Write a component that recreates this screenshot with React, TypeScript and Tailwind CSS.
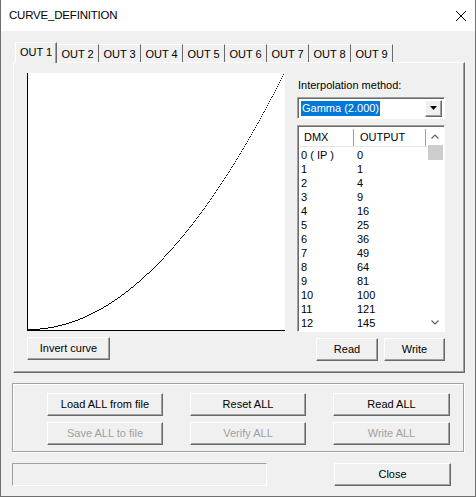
import React from "react";

const rows: [string, string][] = [
  ["0 ( IP )", "0"],
  ["1", "1"],
  ["2", "4"],
  ["3", "9"],
  ["4", "16"],
  ["5", "25"],
  ["6", "36"],
  ["7", "49"],
  ["8", "64"],
  ["9", "81"],
  ["10", "100"],
  ["11", "121"],
  ["12", "145"],
];

const tabs = ["OUT 1", "OUT 2", "OUT 3", "OUT 4", "OUT 5", "OUT 6", "OUT 7", "OUT 8", "OUT 9"];

function Btn({ label, w, disabled }: { label: string; w: string; disabled?: boolean }) {
  return (
    <div
      className={`${w} h-[23px] flex items-center justify-center bg-[#f0f0f0] border border-t-white border-l-white border-r-[#696969] border-b-[#696969] shadow-[inset_-1px_-1px_0_#a0a0a0] ${
        disabled ? "text-[#a0a0a0]" : "text-black"
      }`}
    >
      {label}
    </div>
  );
}

function CurvePlot() {
  const pts: React.ReactElement[] = [];
  for (let i = 0; i < 256; i++) {
    const y = 256 - Math.round((i * i) / 255);
    pts.push(<rect key={i} x={i} y={y} width={1} height={1} fill="#000" />);
  }
  return (
    <div className="w-[258px] h-[258px] bg-white border-l border-b border-black">
      <svg width="257" height="257" shapeRendering="crispEdges">
        {pts}
      </svg>
    </div>
  );
}

export default function App() {
  return (
    <div className="w-[476px] h-[497px] bg-[#f0f0f0] font-['Liberation_Sans',Arial,sans-serif] text-[11px] leading-[13px] text-black border border-t-0 border-[#6f6f6f] flex flex-col overflow-hidden">
      {/* title bar */}
      <div className="h-[31px] shrink-0 bg-white flex items-center justify-between pl-[8px] pr-[8px]">
        <span className="text-[11.5px] tracking-[-0.2px]">CURVE_DEFINITION</span>
        <svg width="12" height="12" viewBox="0 0 12 12">
          <path d="M1 1 L11 11 M11 1 L1 11" stroke="#000" strokeWidth="1" fill="none" />
        </svg>
      </div>

      <div className="pl-[11px] pt-[11px] flex flex-col">
        {/* tab strip */}
        <div className="flex items-end h-[20px] pl-[3px]">
          {tabs.map((t, i) =>
            i === 0 ? (
              <div
                key={t}
                className="w-[42px] h-[21px] -mb-px relative z-10 bg-[#f0f0f0] border-t border-l border-white border-r border-r-[#696969] shadow-[inset_-1px_0_0_#a0a0a0] flex items-center justify-center pb-[1px]"
              >
                {t}
              </div>
            ) : (
              <div
                key={t}
                className="w-[42px] h-[18px] bg-[#f0f0f0] border-t border-white border-r border-r-[#696969] flex items-center justify-center pt-[1px]"
              >
                {t}
              </div>
            )
          )}
        </div>

        {/* tab page */}
        <div className="ml-[1px] w-[452px] border border-t-white border-l-white border-r-[#696969] border-b-[#696969] shadow-[inset_-1px_-1px_0_#a0a0a0] pl-[13px] pt-[10px] pb-[11px] flex">
          <div className="flex flex-col">
            <CurvePlot />
            <div className="mt-[6px]">
              <Btn label="Invert curve" w="w-[83px]" />
            </div>
          </div>

          <div className="ml-[12px] w-[148px] flex flex-col">
            <div className="mt-[6px] pl-[1px]">Interpolation method:</div>

            {/* combo box */}
            <div className="mt-[5px] h-[22px] bg-white border border-t-[#a0a0a0] border-l-[#a0a0a0] border-r-white border-b-white shadow-[inset_1px_1px_0_#696969] flex items-center pl-[3px] pr-[2px]">
              <span className="bg-[#0078d7] text-white px-[1px] leading-[15px]">Gamma (2.000)</span>
              <div className="ml-auto w-[17px] h-[17px] bg-[#f0f0f0] border border-t-white border-l-white border-r-[#696969] border-b-[#696969] shadow-[inset_-1px_-1px_0_#a0a0a0] flex items-center justify-center">
                <svg width="7" height="4" viewBox="0 0 7 4">
                  <path d="M0 0 H7 L3.5 4 Z" fill="#000" />
                </svg>
              </div>
            </div>

            {/* value list */}
            <div className="mt-[6px] h-[207px] bg-white border border-t-[#a0a0a0] border-l-[#a0a0a0] border-r-white border-b-white shadow-[inset_1px_1px_0_#696969] pl-[2px] pt-[3px] flex">
              <div className="flex-1 flex flex-col">
                <div className="h-[18px] flex border-b border-[#e5e5e5]">
                  <div className="w-[54px] pl-[4px] flex items-center border-r border-[#a0a0a0]">DMX</div>
                  <div className="w-[72px] pl-[6px] flex items-center border-r border-[#a0a0a0]">OUTPUT</div>
                </div>
                <div className="pt-[1px]">
                  {rows.map(([d, o]) => (
                    <div key={d} className="h-[14px] flex items-center">
                      <div className="w-[57px] pl-[1px]">{d}</div>
                      <div>{o}</div>
                    </div>
                  ))}
                </div>
              </div>
              {/* scroll bar */}
              <div className="w-[16px] mr-[1px] mb-[1px] mt-[-2px] bg-white flex flex-col items-center">
                <div className="h-[18px] flex items-center justify-center">
                  <svg width="8" height="5" viewBox="0 0 8 5">
                    <path d="M0.5 4.5 L4 1 L7.5 4.5" stroke="#606060" strokeWidth="1.2" fill="none" />
                  </svg>
                </div>
                <div className="w-[15px] h-[15px] bg-[#cdcdcd]" />
                <div className="flex-1" />
                <div className="h-[16px] flex items-center justify-center">
                  <svg width="8" height="5" viewBox="0 0 8 5">
                    <path d="M0.5 0.5 L4 4 L7.5 0.5" stroke="#606060" strokeWidth="1.2" fill="none" />
                  </svg>
                </div>
              </div>
            </div>

            <div className="mt-[6px] flex justify-end gap-[6px] pr-[0px]">
              <Btn label="Read" w="w-[62px]" />
              <Btn label="Write" w="w-[61px]" />
            </div>
          </div>
        </div>

        {/* global actions */}
        <div className="mt-[10px] w-[452px] h-[69px] border border-[#a0a0a0] shadow-[1px_1px_0_#fff,inset_1px_1px_0_#fff] pl-[34px] pt-[9px] flex flex-col gap-[6px]">
          <div className="flex gap-[27px]">
            <Btn label="Load ALL from file" w="w-[116px]" />
            <Btn label="Reset ALL" w="w-[116px]" />
            <Btn label="Read ALL" w="w-[117px]" />
          </div>
          <div className="flex gap-[27px]">
            <Btn label="Save ALL to file" w="w-[116px]" disabled />
            <Btn label="Verify ALL" w="w-[116px]" disabled />
            <Btn label="Write ALL" w="w-[117px]" disabled />
          </div>
        </div>

        {/* status + close */}
        <div className="mt-[11px] flex">
          <div className="w-[255px] h-[23px] border border-t-[#a0a0a0] border-l-[#a0a0a0] border-r-white border-b-white" />
          <div className="ml-[67px]">
            <Btn label="Close" w="w-[117px]" />
          </div>
        </div>
      </div>
    </div>
  );
}
